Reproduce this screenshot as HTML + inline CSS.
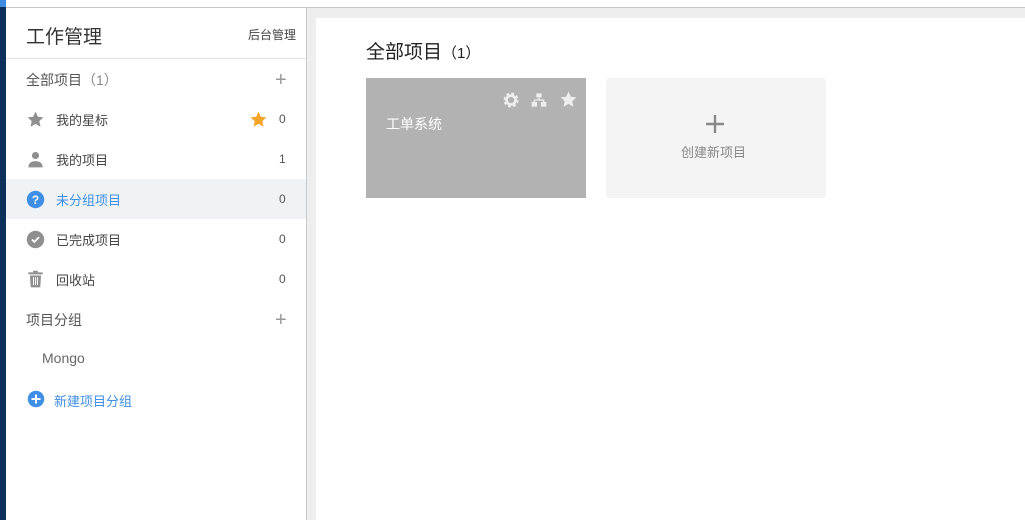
<!DOCTYPE html>
<html><head><meta charset="utf-8"><style>
*{margin:0;padding:0;box-sizing:border-box}
body{width:1025px;height:520px;overflow:hidden;background:#fff;position:relative;font-family:"Liberation Sans","Noto Sans CJK SC",sans-serif;}
.a{position:absolute;white-space:nowrap}
.item{position:absolute;left:6px;width:300px;height:40px;font-size:13px;color:#444;}
.item .t{position:absolute;left:50px;top:11px}
.item .n{position:absolute;left:273px;top:13px;font-size:12px;color:#555}
.item svg{position:absolute;left:20px;top:11px}
</style></head><body>
<div class="a" style="left:0;top:0;width:6px;height:520px;background:#0d2f5b"></div>
<div class="a" style="left:0;top:0;width:6px;height:7px;background:#3d8ae0"></div>
<div class="a" style="left:6px;top:7px;width:1019px;height:1px;background:#c6c6c6"></div>
<div class="a" style="left:306px;top:8px;width:1px;height:512px;background:#c9c9c9"></div>
<div class="a" style="left:307px;top:8px;width:9px;height:512px;background:#eee"></div>
<div class="a" style="left:316px;top:8px;width:709px;height:10px;background:#eee"></div>

<div class="a" style="left:26px;top:22px;font-size:19px;color:#333">工作管理</div>
<div class="a" style="left:248px;top:26px;font-size:12px;color:#444">后台管理</div>
<div class="a" style="left:6px;top:58px;width:300px;height:1px;background:#e2e2e2"></div>

<div class="a" style="left:26px;top:70px;font-size:14px;color:#555">全部项目<span style="color:#888">（1）</span></div>
<div class="a" style="left:275px;top:69px;font-size:20px;color:#999;font-weight:300">+</div>

<div class="item" style="top:99px"><svg width="19" height="19" viewBox="0 0 24 24"><path d="M12 2l3 6.5 7 .8-5.2 4.8 1.5 7L12 17.6 5.7 21.1l1.5-7L2 9.3l7-.8z" fill="#8f8f8f"/></svg><span class="t">我的星标</span>
<svg style="left:243px" width="19" height="19" viewBox="0 0 24 24"><path d="M12 2l3 6.5 7 .8-5.2 4.8 1.5 7L12 17.6 5.7 21.1l1.5-7L2 9.3l7-.8z" fill="#f7a52a"/></svg><span class="n">0</span></div>

<div class="item" style="top:139px"><svg width="19" height="19" viewBox="0 0 24 24"><circle cx="12" cy="7" r="4.5" fill="#8f8f8f"/><path d="M3 22c0-6 4-8 9-8s9 2 9 8z" fill="#8f8f8f"/></svg><span class="t">我的项目</span><span class="n">1</span></div>

<div class="item" style="top:179px;background:#f0f3f6"><svg width="19" height="19" viewBox="0 0 24 24"><circle cx="12" cy="12" r="11" fill="#3f8fe6"/><text x="12" y="17.5" font-size="15" font-weight="bold" fill="#fff" text-anchor="middle" font-family="Liberation Sans">?</text></svg><span class="t" style="color:#3f8fe6">未分组项目</span><span class="n">0</span></div>

<div class="item" style="top:219px"><svg width="19" height="19" viewBox="0 0 24 24"><circle cx="12" cy="12" r="11" fill="#8f8f8f"/><path d="M7.5 12l3 3 6-6" stroke="#fff" stroke-width="2.2" fill="none"/></svg><span class="t">已完成项目</span><span class="n">0</span></div>

<div class="item" style="top:259px"><svg width="19" height="19" viewBox="0 0 24 24"><rect x="3" y="3" width="18" height="2.5" fill="#8f8f8f"/><rect x="9" y="1" width="6" height="2" fill="#8f8f8f"/><path d="M5 7h14l-1 15H6z" fill="#8f8f8f"/><path d="M9.5 9v10M12 9v10M14.5 9v10" stroke="#fff" stroke-width="1.2"/></svg><span class="t">回收站</span><span class="n">0</span></div>

<div class="a" style="left:26px;top:310px;font-size:14px;color:#555">项目分组</div>
<div class="a" style="left:275px;top:309px;font-size:20px;color:#999;font-weight:300">+</div>
<div class="a" style="left:42px;top:350px;font-size:14px;color:#666">Mongo</div>
<svg class="a" style="left:27px;top:390px" width="18" height="18" viewBox="0 0 24 24"><circle cx="12" cy="12" r="11" fill="#3f8fe6"/><path d="M12 6v12M6 12h12" stroke="#fff" stroke-width="2.6"/></svg>
<div class="a" style="left:54px;top:391px;font-size:13px;color:#3f8fe6">新建项目分组</div>

<div class="a" style="left:366px;top:37px;font-size:19px;color:#222">全部项目<span style="font-size:15px">（1）</span></div>

<div class="a" style="left:366px;top:78px;width:220px;height:120px;background:#b2b2b2">
<div class="a" style="left:20px;top:36px;font-size:14px;color:#fff">工单系统</div>
<svg class="a" style="left:136px;top:13px" width="18" height="18" viewBox="0 0 24 24"><circle cx="12" cy="12" r="8" fill="none" stroke="#eee" stroke-width="4" stroke-dasharray="3.5 2.8"/><circle cx="12" cy="12" r="6" fill="none" stroke="#eee" stroke-width="3.5"/></svg>
<svg class="a" style="left:165px;top:14px" width="16" height="16" viewBox="0 0 24 24"><rect x="8" y="2" width="8" height="6" fill="#eee"/><path d="M12 8v4M5 12h14M5 12v4M19 12v4" stroke="#eee" stroke-width="2" fill="none"/><rect x="1" y="15" width="8" height="7" fill="#eee"/><rect x="15" y="15" width="8" height="7" fill="#eee"/></svg>
<svg class="a" style="left:193px;top:12px" width="19" height="19" viewBox="0 0 24 24"><path d="M12 2l3 6.5 7 .8-5.2 4.8 1.5 7L12 17.6 5.7 21.1l1.5-7L2 9.3l7-.8z" fill="#eee"/></svg>
</div>

<div class="a" style="left:606px;top:78px;width:220px;height:120px;background:#f4f4f4;border-radius:3px">
<svg class="a" style="left:99px;top:36px" width="20" height="20" viewBox="0 0 20 20"><path d="M10 1v18M1 10h18" stroke="#888" stroke-width="2.4"/></svg>
<div class="a" style="left:75px;top:64px;font-size:13px;color:#888">创建新项目</div>
</div>
</body></html>
